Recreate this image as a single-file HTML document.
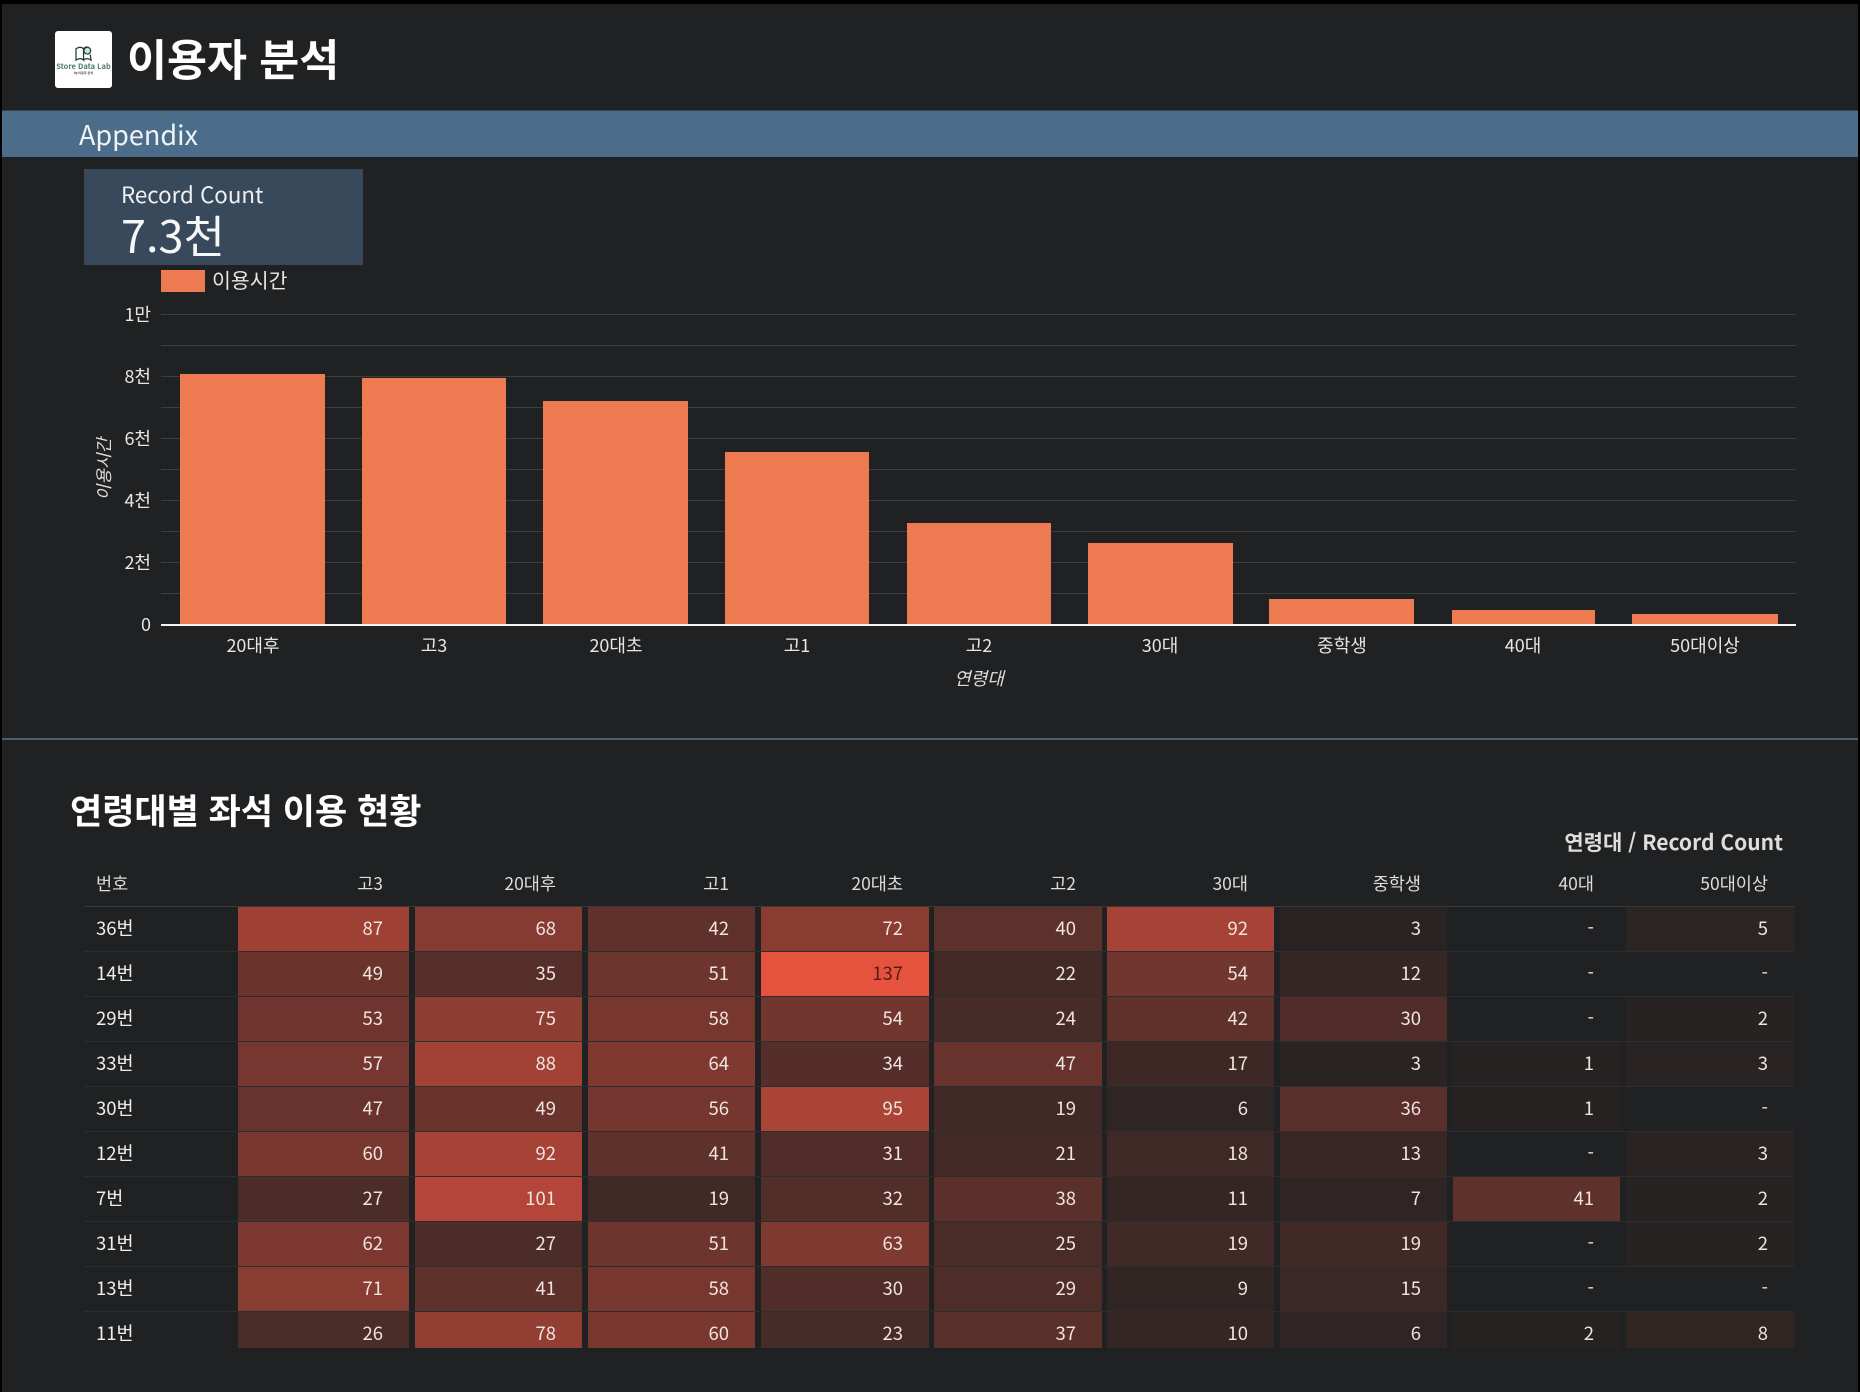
<!DOCTYPE html>
<html lang="ko"><head><meta charset="utf-8"><title>이용자 분석</title>
<style>
*{box-sizing:border-box;margin:0;padding:0}
html,body{width:1860px;height:1392px;overflow:hidden;background:#000}
body{position:relative;font-family:"Noto Sans CJK KR","Liberation Sans",sans-serif;color:#eee}
#p{position:absolute;left:2px;top:4px;width:1856px;height:1388px;background:#202122}
.a{position:absolute;white-space:nowrap}
.g{position:absolute;left:161px;width:1635px;height:1px;background:#3c3d3f}
.b{position:absolute;background:#ed7a50}
.y{position:absolute;right:1709px;font-size:18px;line-height:24px;color:#e6e6e6}
.x{position:absolute;top:632px;width:180px;text-align:center;font-size:18px;line-height:26px;color:#e6e6e6}
.h{position:absolute;top:871px;height:26px;line-height:26px;font-size:17.5px;color:#ddd;text-align:right;padding-right:26px}
.r{position:absolute;left:84px;width:1710px;height:45px;border-top:1px solid #2c2d2f}
.r b{position:absolute;top:0;height:100%;font-weight:400;font-size:18.5px;line-height:42px;text-align:right;padding-right:26px;color:#f0e4e0;background:color-mix(in srgb,#e5533f calc((var(--v) + 4)/141*100%),#202122)}
.r i{position:absolute;left:12px;top:0;font-style:normal;font-size:18.5px;line-height:42px;color:#eee}
.r b:nth-of-type(1){left:154px;width:171px}
.r b:nth-of-type(2){left:331px;width:167px}
.r b:nth-of-type(3){left:504px;width:167px}
.r b:nth-of-type(4){left:677px;width:168px}
.r b:nth-of-type(5){left:850px;width:168px}
.r b:nth-of-type(6){left:1023px;width:167px}
.r b:nth-of-type(7){left:1196px;width:167px}
.r b:nth-of-type(8){left:1369px;width:167px}
.r b:nth-of-type(9){left:1542px;width:168px}
</style></head><body>
<div id="p"></div>
<div class="a" style="left:55px;top:31px;width:57px;height:57px;background:#fff;border-radius:3px"></div>
<svg class="a" style="left:74px;top:45px" width="20" height="17" viewBox="0 0 21 18" fill="none" stroke="#1d3b34" stroke-width="1.3"><path d="M2 16V4c3-2 6-2 8 0v12c-2-2-5-2-8 0zM10 4c1-1 2-2 4-2M10 16c2-2 5-2 8 0l-1-6"/><circle cx="14" cy="6" r="3.6" fill="#cfe3da"/></svg>
<div class="a" style="left:55px;top:61px;width:57px;text-align:center;font-size:7.5px;line-height:11px;font-weight:700;color:#4f7a6c">Store Data Lab</div>
<div class="a" style="left:55px;top:71px;width:57px;text-align:center;font-size:3px;line-height:5px;font-weight:700;color:#444">by 이용자 분석</div>
<div class="a" style="left:127px;top:27px;font-size:43.5px;line-height:62px;font-weight:700;color:#fff">이용자 분석</div>
<div class="a" style="left:2px;top:110px;width:1856px;height:47px;background:#4b6d8a;border-top:1px solid #2f4658"></div>
<div class="a" style="left:79px;top:114px;font-size:27px;line-height:40px;color:#f0f3f6">Appendix</div>
<div class="a" style="left:84px;top:169px;width:279px;height:96px;background:#38495b"></div>
<div class="a" style="left:121px;top:178px;font-size:22.3px;line-height:32px;color:#eef1f4">Record Count</div>
<div class="a" style="left:121px;top:204px;font-size:45px;line-height:60px;color:#f5f6f7">7.3천</div>
<div class="a" style="left:161px;top:270px;width:44px;height:22px;background:#ed7a50"></div>
<div class="a" style="left:212px;top:266px;font-size:20.5px;line-height:26px;color:#e6e6e6">이용시간</div>
<div class="g" style="top:314px"></div><div class="g" style="top:345px"></div><div class="g" style="top:376px"></div><div class="g" style="top:407px"></div><div class="g" style="top:438px"></div><div class="g" style="top:469px"></div><div class="g" style="top:500px"></div><div class="g" style="top:531px"></div><div class="g" style="top:562px"></div><div class="g" style="top:593px"></div>
<div class="y" style="top:302px">1만</div><div class="y" style="top:364px">8천</div><div class="y" style="top:426px">6천</div><div class="y" style="top:488px">4천</div><div class="y" style="top:550px">2천</div><div class="y" style="top:612px">0</div>
<div class="a" style="left:91px;top:456px;width:24px;height:26px;line-height:26px;font-size:17px;font-style:italic;color:#ddd;text-align:center;transform:rotate(-90deg);transform-origin:center;display:flex;justify-content:center">이용시간</div>
<div class="b" style="left:180px;width:145px;top:374px;height:251px"></div>
<div class="b" style="left:362px;width:144px;top:378px;height:247px"></div>
<div class="b" style="left:543px;width:145px;top:401px;height:224px"></div>
<div class="b" style="left:725px;width:144px;top:452px;height:173px"></div>
<div class="b" style="left:907px;width:144px;top:523px;height:102px"></div>
<div class="b" style="left:1088px;width:145px;top:543px;height:82px"></div>
<div class="b" style="left:1269px;width:145px;top:599px;height:26px"></div>
<div class="b" style="left:1452px;width:143px;top:610px;height:15px"></div>
<div class="b" style="left:1632px;width:146px;top:614px;height:11px"></div>
<div class="a" style="left:161px;top:624px;width:1635px;height:2px;background:#f2f2f2"></div>
<div class="x" style="left:163px">20대후</div><div class="x" style="left:344px">고3</div><div class="x" style="left:526px">20대초</div><div class="x" style="left:707px">고1</div><div class="x" style="left:889px">고2</div><div class="x" style="left:1070px">30대</div><div class="x" style="left:1252px">중학생</div><div class="x" style="left:1433px">40대</div><div class="x" style="left:1615px">50대이상</div>
<div class="a" style="left:899px;top:665px;width:160px;text-align:center;font-size:18px;line-height:26px;font-style:italic;color:#ddd">연령대</div>
<div class="a" style="left:2px;top:738px;width:1856px;height:2px;background:#4a5e72"></div>
<div class="a" style="left:70px;top:784px;font-size:35px;line-height:52px;font-weight:700;color:#fff">연령대별 좌석 이용 현황</div>
<div class="a" style="right:77px;top:827px;font-size:21px;line-height:30px;font-weight:700;color:#ddd">연령대 / Record Count</div>
<div class="h" style="left:84px;width:154px;text-align:left;padding-left:12px">번호</div>
<div class="h" style="left:238px;width:171px">고3</div><div class="h" style="left:415px;width:167px">20대후</div><div class="h" style="left:588px;width:167px">고1</div><div class="h" style="left:761px;width:168px">20대초</div><div class="h" style="left:934px;width:168px">고2</div><div class="h" style="left:1107px;width:167px">30대</div><div class="h" style="left:1280px;width:167px">중학생</div><div class="h" style="left:1453px;width:167px">40대</div><div class="h" style="left:1626px;width:168px">50대이상</div>
<div class="r" style="top:906px;border-top-color:#38393b"><i>36번</i><b style="--v:87">87</b><b style="--v:68">68</b><b style="--v:42">42</b><b style="--v:72">72</b><b style="--v:40">40</b><b style="--v:92">92</b><b style="--v:3">3</b><b style="--v:-4">-</b><b style="--v:5">5</b></div>
<div class="r" style="top:951px"><i>14번</i><b style="--v:49">49</b><b style="--v:35">35</b><b style="--v:51">51</b><b style="--v:137;color:#5a1a14">137</b><b style="--v:22">22</b><b style="--v:54">54</b><b style="--v:12">12</b><b style="--v:-4">-</b><b style="--v:-4">-</b></div>
<div class="r" style="top:996px"><i>29번</i><b style="--v:53">53</b><b style="--v:75">75</b><b style="--v:58">58</b><b style="--v:54">54</b><b style="--v:24">24</b><b style="--v:42">42</b><b style="--v:30">30</b><b style="--v:-4">-</b><b style="--v:2">2</b></div>
<div class="r" style="top:1041px"><i>33번</i><b style="--v:57">57</b><b style="--v:88">88</b><b style="--v:64">64</b><b style="--v:34">34</b><b style="--v:47">47</b><b style="--v:17">17</b><b style="--v:3">3</b><b style="--v:1">1</b><b style="--v:3">3</b></div>
<div class="r" style="top:1086px"><i>30번</i><b style="--v:47">47</b><b style="--v:49">49</b><b style="--v:56">56</b><b style="--v:95">95</b><b style="--v:19">19</b><b style="--v:6">6</b><b style="--v:36">36</b><b style="--v:1">1</b><b style="--v:-4">-</b></div>
<div class="r" style="top:1131px"><i>12번</i><b style="--v:60">60</b><b style="--v:92">92</b><b style="--v:41">41</b><b style="--v:31">31</b><b style="--v:21">21</b><b style="--v:18">18</b><b style="--v:13">13</b><b style="--v:-4">-</b><b style="--v:3">3</b></div>
<div class="r" style="top:1176px"><i>7번</i><b style="--v:27">27</b><b style="--v:101">101</b><b style="--v:19">19</b><b style="--v:32">32</b><b style="--v:38">38</b><b style="--v:11">11</b><b style="--v:7">7</b><b style="--v:41">41</b><b style="--v:2">2</b></div>
<div class="r" style="top:1221px"><i>31번</i><b style="--v:62">62</b><b style="--v:27">27</b><b style="--v:51">51</b><b style="--v:63">63</b><b style="--v:25">25</b><b style="--v:19">19</b><b style="--v:19">19</b><b style="--v:-4">-</b><b style="--v:2">2</b></div>
<div class="r" style="top:1266px"><i>13번</i><b style="--v:71">71</b><b style="--v:41">41</b><b style="--v:58">58</b><b style="--v:30">30</b><b style="--v:29">29</b><b style="--v:9">9</b><b style="--v:15">15</b><b style="--v:-4">-</b><b style="--v:-4">-</b></div>
<div class="r" style="top:1311px;height:37px"><i>11번</i><b style="--v:26">26</b><b style="--v:78">78</b><b style="--v:60">60</b><b style="--v:23">23</b><b style="--v:37">37</b><b style="--v:10">10</b><b style="--v:6">6</b><b style="--v:2">2</b><b style="--v:8">8</b></div>
</body></html>
